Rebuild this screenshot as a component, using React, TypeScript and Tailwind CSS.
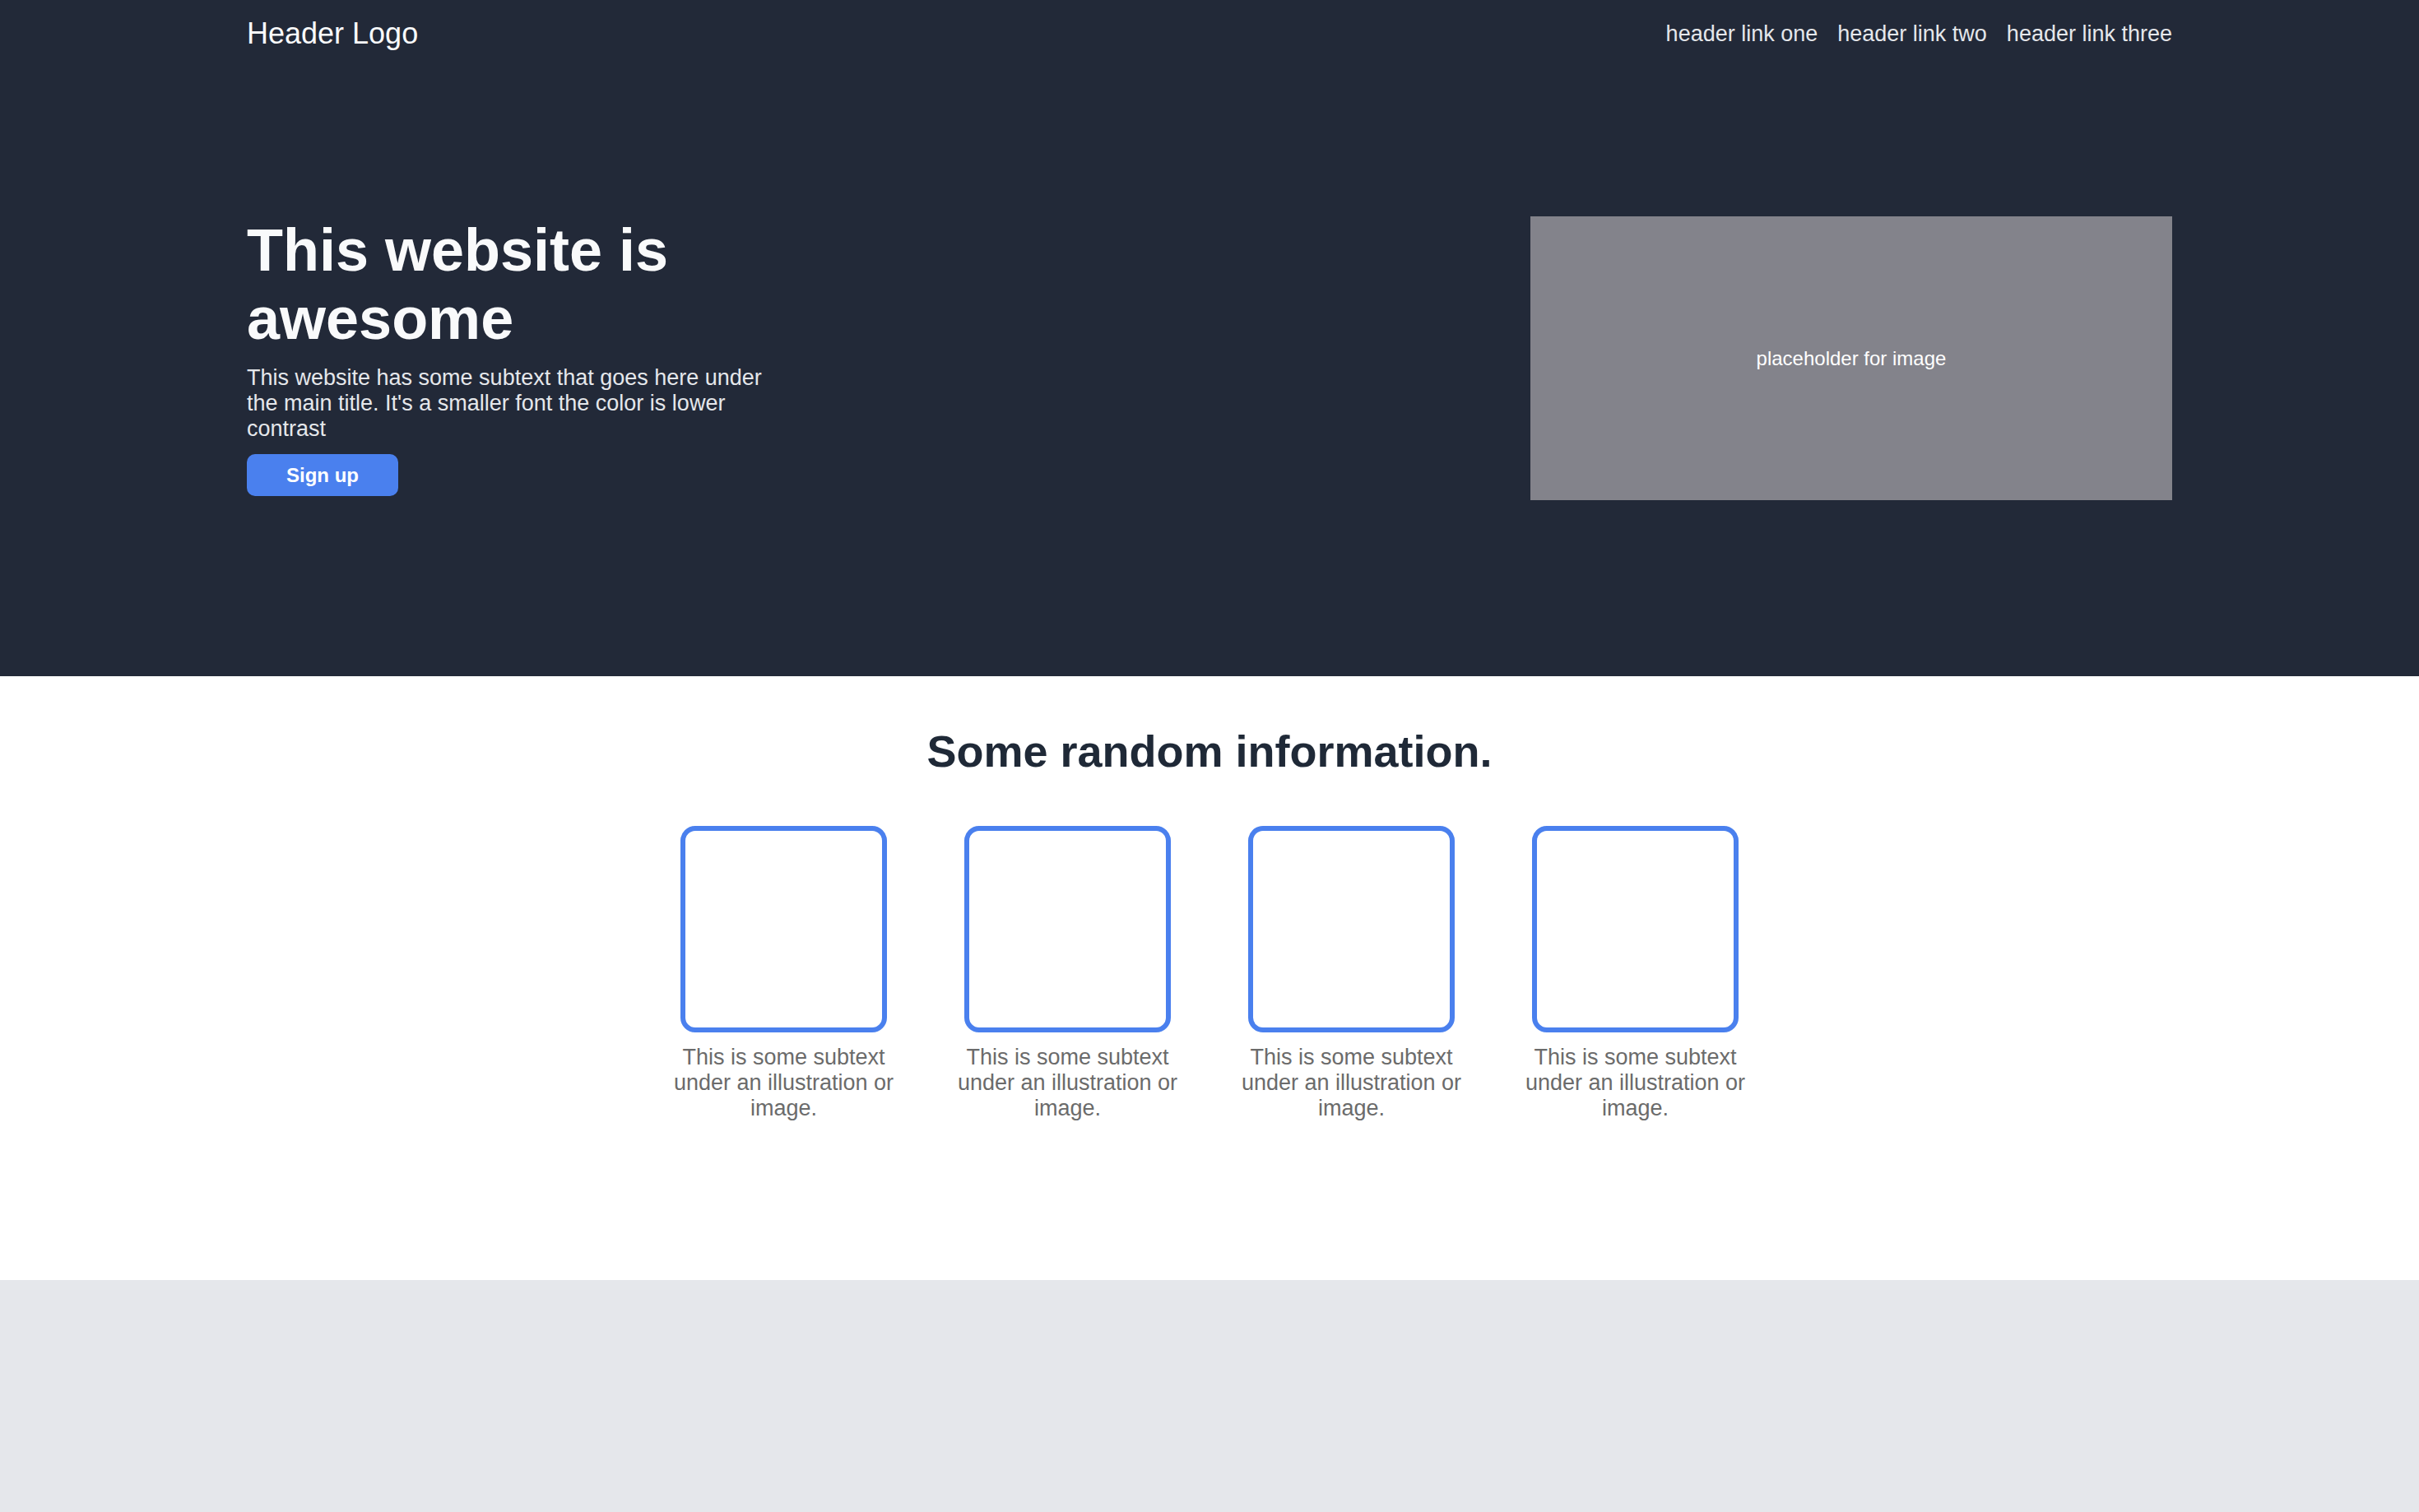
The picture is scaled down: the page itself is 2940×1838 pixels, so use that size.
export default function App() {
  const cards = [1, 2, 3, 4];

  return (
    <div className="min-h-screen bg-[#e5e7eb] font-['Liberation_Sans',Arial,sans-serif]">
      {/* Header + hero */}
      <section className="bg-[#222938]">
        <div className="px-[300px]">
          <header className="flex h-[82px] items-center justify-between">
            <div className="text-[36px] leading-none text-[#f9fafb]">Header Logo</div>
            <nav className="flex gap-[24px] text-[27px] leading-none text-[#e5e7eb]">
              <a href="#">header link one</a>
              <a href="#">header link two</a>
              <a href="#">header link three</a>
            </nav>
          </header>

          <div className="flex items-start justify-between pt-[181px] pb-[214px]">
            <div className="flex w-[650px] flex-col">
              <h1 className="text-[72px] font-bold leading-[83px] text-[#f9fafb]">
                This website is awesome
              </h1>
              <p className="mt-[15px] text-[27px] leading-[31px] text-[#e5e7eb]">
                This website has some subtext that goes here under the main title. It's a smaller font the color is lower contrast
              </p>
              <button className="mt-[15px] h-[51px] w-[184px] rounded-[10px] bg-[#4a80ee] text-[24px] font-bold text-white">
                Sign up
              </button>
            </div>
            <div className="flex h-[345px] w-[780px] items-center justify-center bg-[#83838b] text-[24px] text-white">
              placeholder for image
            </div>
          </div>
        </div>
      </section>

      {/* Info section */}
      <section className="bg-white pt-[60px] pb-[193px]">
        <h2 className="text-center text-[54px] font-bold leading-[62px] text-[#1f2937]">
          Some random information.
        </h2>
        <div className="mt-[60px] flex justify-center gap-[45px]">
          {cards.map((c) => (
            <div key={c} className="flex w-[300px] flex-col items-center">
              <div className="h-[251px] w-[251px] rounded-[18px] border-[6px] border-[#4a80ee]" />
              <p className="mt-[15px] text-center text-[27px] leading-[31px] text-[#6b6b6b]">
                This is some subtext under an illustration or image.
              </p>
            </div>
          ))}
        </div>
      </section>
    </div>
  );
}
